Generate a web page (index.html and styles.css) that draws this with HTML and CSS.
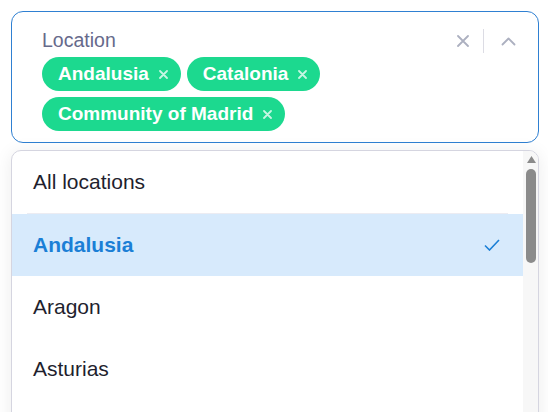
FILE: index.html
```html
<!DOCTYPE html>
<html lang="en">
<head>
<meta charset="utf-8">
<title>Location select</title>
<link rel="stylesheet" href="styles.css">
</head>
<body>
<div class="wrap">
  <div class="control">
    <div class="main">
      <div class="label">Location</div>
      <div class="chips">
        <span class="chip">Andalusia<svg class="chip-x" width="9" height="9" viewBox="0 0 9 9"><path d="M1 1L8 8M8 1L1 8" stroke="rgba(255,255,255,0.75)" stroke-width="1.8" stroke-linecap="round"/></svg></span>
        <span class="chip">Catalonia<svg class="chip-x" width="9" height="9" viewBox="0 0 9 9"><path d="M1 1L8 8M8 1L1 8" stroke="rgba(255,255,255,0.75)" stroke-width="1.8" stroke-linecap="round"/></svg></span>
        <span class="chip">Community of Madrid<svg class="chip-x" width="9" height="9" viewBox="0 0 9 9"><path d="M1 1L8 8M8 1L1 8" stroke="rgba(255,255,255,0.75)" stroke-width="1.8" stroke-linecap="round"/></svg></span>
      </div>
    </div>
    <div class="actions">
      <svg class="clear" width="12" height="12" viewBox="0 0 12 12"><path d="M1 1L11 11M11 1L1 11" stroke="#acb0c0" stroke-width="1.8" stroke-linecap="round"/></svg>
      <span class="sep"></span>
      <svg class="chev" width="15" height="9" viewBox="0 0 15 9"><path d="M1.5 7.5L7.5 1.5L13.5 7.5" fill="none" stroke="#acb0c0" stroke-width="1.8" stroke-linecap="round" stroke-linejoin="round"/></svg>
    </div>
  </div>
  <div class="menu">
    <ul class="list">
      <li class="opt first">All locations</li>
      <li class="opt selected">Andalusia<svg class="check" width="16" height="12" viewBox="0 0 16 12"><path d="M1 6.5L5.5 11L15 1" fill="none" stroke="#1b7fd6" stroke-width="1.6"/></svg></li>
      <li class="opt">Aragon</li>
      <li class="opt">Asturias</li>
    </ul>
    <div class="scrollbar">
      <svg class="sb-arrow" width="9" height="7" viewBox="0 0 9 7"><polygon points="4.5,0 9,7 0,7" fill="#8b8b8b"/></svg>
      <div class="sb-thumb"></div>
    </div>
  </div>
</div>
</body>
</html>
```
FILE: styles.css
```css
html, body {
  margin: 0;
  padding: 0;
  background: #ffffff;
  overflow: hidden;
  height: 412px;
}
body {
  font-family: "Liberation Sans", Arial, sans-serif;
  color: #1f1f2e;
}
.wrap {
  padding: 11px 9px 0 11px;
}
.control {
  display: flex;
  border: 1px solid #2f80d2;
  border-radius: 12px;
  background: #fff;
  padding: 16px 22px 11px 30px;
}
.main {
  flex: 1;
}
.label {
  font-size: 19.5px;
  line-height: 24px;
  color: #666a8b;
  margin-bottom: 5px;
}
.chips {
  display: flex;
  flex-wrap: wrap;
  gap: 6px;
}
.chip {
  display: inline-flex;
  align-items: center;
  height: 34px;
  border-radius: 17px;
  background: #1cd98f;
  color: #fff;
  font-weight: 700;
  font-size: 19px;
  padding: 0 13px 0 16px;
}
.chip-x {
  margin-left: 10px;
  margin-top: 1px;
}
.actions {
  display: flex;
  align-items: center;
  height: 24px;
  margin-top: 1px;
}
.clear {
  margin-right: 14px;
}
.sep {
  width: 1px;
  height: 24px;
  background: #dcdce4;
  margin-right: 17px;
}
.menu {
  display: flex;
  margin-top: 7px;
  height: 376px;
  border: 1px solid #d5d5e0;
  border-radius: 10px;
  background: #fff;
  overflow: hidden;
  box-shadow: 0 2px 18px rgba(0,0,0,0.08);
}
.list {
  flex: 1;
  list-style: none;
  margin: 0;
  padding: 0;
  overflow: hidden;
}
.opt {
  display: flex;
  align-items: center;
  justify-content: space-between;
  height: 62px;
  padding: 0 23px 0 21px;
  font-size: 21px;
}
.first {
  height: 62px;
  border-bottom: 1px solid #ececf2;
  margin: 0 15px;
  padding-left: 6px;
}
.selected {
  background: #d7eafc;
  color: #1b7fd6;
  font-weight: 700;
}
.scrollbar {
  width: 15px;
  flex: none;
  background: #f7f7f7;
  display: flex;
  flex-direction: column;
  align-items: center;
}
.sb-arrow {
  margin-top: 5px;
  margin-left: 1px;
}
.sb-thumb {
  width: 10px;
  height: 94px;
  margin-top: 6px;
  margin-left: 1px;
  border-radius: 5px;
  background: #8b8b8b;
}
```
